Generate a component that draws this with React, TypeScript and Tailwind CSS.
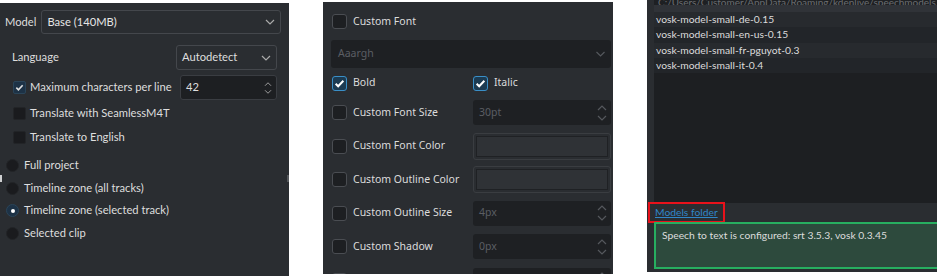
import React from 'react'

const Chevron = ({ className = '' }: { className?: string }) => (
  <svg className={className} width="10" height="6" viewBox="0 0 10 6" fill="none" stroke="currentColor" strokeWidth={1.2}>
    <path d="M1 1l4 4 4-4" />
  </svg>
)

const SpinArrows = ({ className = '' }: { className?: string }) => (
  <svg className={className} width="12" height="18" viewBox="0 0 12 18" fill="none" stroke="currentColor" strokeWidth={1.2}>
    <path d="M2 6l4-4 4 4M2 12l4 4 4-4" />
  </svg>
)

const Check = ({ size = 10 }: { size?: number }) => (
  <svg width={size} height={size} viewBox="0 0 10 10" fill="none" stroke="currentColor" strokeWidth={1.8}>
    <path d="M1.5 5.2l2.3 2.3 4.7-5" />
  </svg>
)

// left panel (windows style)
const SmallBox = ({ checked = false }: { checked?: boolean }) => (
  <span
    className={`w-[13px] h-[13px] shrink-0 flex items-center justify-center rounded-[2px] border ${
      checked ? 'bg-[#1d3246] border-[#2a4458] text-[#e0e0e0]' : 'bg-[#1a1b1e] border-[#222427]'
    }`}
  >
    {checked && <Check size={9} />}
  </span>
)

const Radio = ({ label, checked = false }: { label: string; checked?: boolean }) => (
  <div className="h-[22.7px] flex items-center gap-[5px] pl-[6px]">
    <span
      className={`w-[13px] h-[13px] rounded-full flex items-center justify-center border ${
        checked ? 'bg-[#1d3246] border-[#2a4458]' : 'bg-[#1a1b1e] border-[#222427]'
      }`}
    >
      {checked && <span className="w-[4px] h-[4px] rounded-full bg-white" />}
    </span>
    <span>{label}</span>
  </div>
)

const LeftPanel = () => (
  <div className="w-[289px] h-[273px] mt-[3px] bg-[#2a2d31] text-[#dedede] text-[11.2px] whitespace-nowrap font-['Lato','Open_Sans',sans-serif] relative">
    <div className="flex items-center gap-[5px] pl-[5px] pt-[7px]">
      <span>Model</span>
      <div className="w-[240px] h-[24px] border border-[#44474c] rounded-[3px] flex items-center justify-between px-[5px] text-[#e6e6e6]">
        <span>Base (140MB)</span>
        <Chevron className="text-[#aaa]" />
      </div>
    </div>
    <div className="flex items-center justify-between pl-[12px] pr-[12px] mt-[11px]">
      <span>Language</span>
      <div className="w-[101px] h-[25px] border border-[#44474c] rounded-[3px] flex items-center justify-between px-[5px]">
        <span>Autodetect</span>
        <Chevron className="text-[#aaa]" />
      </div>
    </div>
    <div className="flex items-center justify-between pl-[13px] pr-[12px] mt-[5px]">
      <div className="flex items-center gap-[4px]">
        <SmallBox checked />
        <span>Maximum characters per line</span>
      </div>
      <div className="w-[97px] h-[25px] bg-[#1d1f22] border border-[#3a3d42] rounded-[3px] flex items-center justify-between pl-[5px] pr-[2px]">
        <span>42</span>
        <SpinArrows className="text-[#aaa] scale-75" />
      </div>
    </div>
    <div className="pl-[13px] mt-[1px] flex flex-col">
      <div className="h-[24px] flex items-center gap-[4px]">
        <SmallBox />
        <span>Translate with SeamlessM4T</span>
      </div>
      <div className="h-[24px] flex items-center gap-[4px]">
        <SmallBox />
        <span>Translate to English</span>
      </div>
    </div>
    <div className="mt-[5px] flex flex-col">
      <Radio label="Full project" />
      <Radio label="Timeline zone (all tracks)" />
      <Radio label="Timeline zone (selected track)" checked />
      <Radio label="Selected clip" />
    </div>
    <span className="absolute left-0 top-[172px] w-[2px] h-[7px] bg-[#cfd0d2]" />
    <span className="absolute right-0 top-[172px] w-[2px] h-[7px] bg-[#55585c]" />
  </div>
)

// middle panel (breeze style)
const Box = ({ checked = false }: { checked?: boolean }) => (
  <span
    className={`w-[15px] h-[15px] shrink-0 flex items-center justify-center rounded-[3px] border ${
      checked ? 'bg-[#1c3b52] border-[#3a8fc7] text-white' : 'bg-[#1d1f22] border-[#4a4d52]'
    }`}
  >
    {checked && <Check size={11} />}
  </span>
)

const Spin = ({ value }: { value: string }) => (
  <div className="w-[138px] h-[25px] bg-[#1e2023] rounded-[3px] flex items-center justify-between pl-[6px] pr-[3px] text-[#5b5e63]">
    <span>{value}</span>
    <SpinArrows className="text-[#55585d]" />
  </div>
)

const ColorBtn = () => (
  <div className="w-[138px] h-[27px] border border-[#3a3d41] rounded-[3px] p-[2px]">
    <div className="w-full h-full bg-[#2f3236] border border-[#1f2124]" />
  </div>
)

const Row = ({ label, children }: { label: string; children?: React.ReactNode }) => (
  <div className="h-[33.5px] shrink-0 flex items-center pl-[9px] pr-[2px]">
    <div className="w-[141px] flex items-center gap-[6px]">
      <Box />
      <span>{label}</span>
    </div>
    {children}
  </div>
)

const MiddlePanel = () => (
  <div className="w-[290px] h-[272px] mt-[2px] bg-[#2a2d31] text-[#dcdcdc] text-[10.5px] whitespace-nowrap font-['Noto_Sans','Open_Sans',sans-serif] overflow-hidden flex flex-col">
    <div className="flex items-center gap-[6px] pl-[9px] pt-[12px]">
      <Box />
      <span>Custom Font</span>
    </div>
    <div className="ml-[8px] mr-[2px] mt-[10px] h-[28px] shrink-0 bg-[#1e2023] rounded-[3px] flex items-center justify-between pl-[7px] pr-[5px] text-[#5b5e63]">
      <span>Aaargh</span>
      <Chevron className="text-[#55585d] w-[11px]" />
    </div>
    <div className="h-[28px] pt-[3px] shrink-0 flex items-center pl-[9px] pr-[2px]">
      <div className="w-[141px] flex items-center gap-[6px]">
        <Box checked />
        <span>Bold</span>
      </div>
      <div className="flex items-center gap-[6px]">
        <Box checked />
        <span>Italic</span>
      </div>
    </div>
    <Row label="Custom Font Size">
      <Spin value="30pt" />
    </Row>
    <Row label="Custom Font Color">
      <ColorBtn />
    </Row>
    <Row label="Custom Outline Color">
      <ColorBtn />
    </Row>
    <Row label="Custom Outline Size">
      <Spin value="4px" />
    </Row>
    <Row label="Custom Shadow">
      <Spin value="0px" />
    </Row>
    <Row label="">
      <Spin value="" />
    </Row>
  </div>
)

const models = ['vosk-model-small-de-0.15', 'vosk-model-small-en-us-0.15', 'vosk-model-small-fr-pguyot-0.3', 'vosk-model-small-it-0.4']

const RightPanel = () => (
  <div className="w-[290px] h-[272px] bg-[#2a2d31] text-[#dcdcdc] text-[10.3px] whitespace-nowrap font-['Lato','Open_Sans',sans-serif] flex flex-col overflow-hidden">
    <div className="h-[5px] ml-[7px] bg-[#1e2023] text-[#6a6d71] text-[10px] leading-[4px] pl-[4px] overflow-hidden">
      C:/Users/Customer/AppData/Roaming/kdenlive/speechmodels
    </div>
    <div className="h-[7px] ml-[7px] bg-[#303338]" />
    <div className="ml-[7px] h-[191px] bg-[#1d1f22] flex flex-col">
      {models.map((m, i) => (
        <div key={m} className={`h-[15.3px] flex items-center pl-[2px] ${i % 2 === 0 ? 'bg-[#272a2e]' : 'bg-[#222529]'}`}>
          {m}
        </div>
      ))}
    </div>
    <div className="h-[19px] flex items-center">
      <span className="ml-[1px] h-[21px] px-[5px] border-2 border-[#e8121b] flex items-center text-[#2f86c8] underline">
        Models folder
      </span>
    </div>
    <div className="ml-[7px] h-[47px] bg-[#2d4a3d] border-2 border-r-0 border-[#27ae60] pl-[6px] pt-[4px]">
      Speech to text is configured: srt 3.5.3, vosk 0.3.45
    </div>
  </div>
)

export default function App() {
  return (
    <div className="w-[937px] h-[276px] bg-white flex items-start gap-[34px] overflow-hidden">
      <LeftPanel />
      <MiddlePanel />
      <RightPanel />
    </div>
  )
}
